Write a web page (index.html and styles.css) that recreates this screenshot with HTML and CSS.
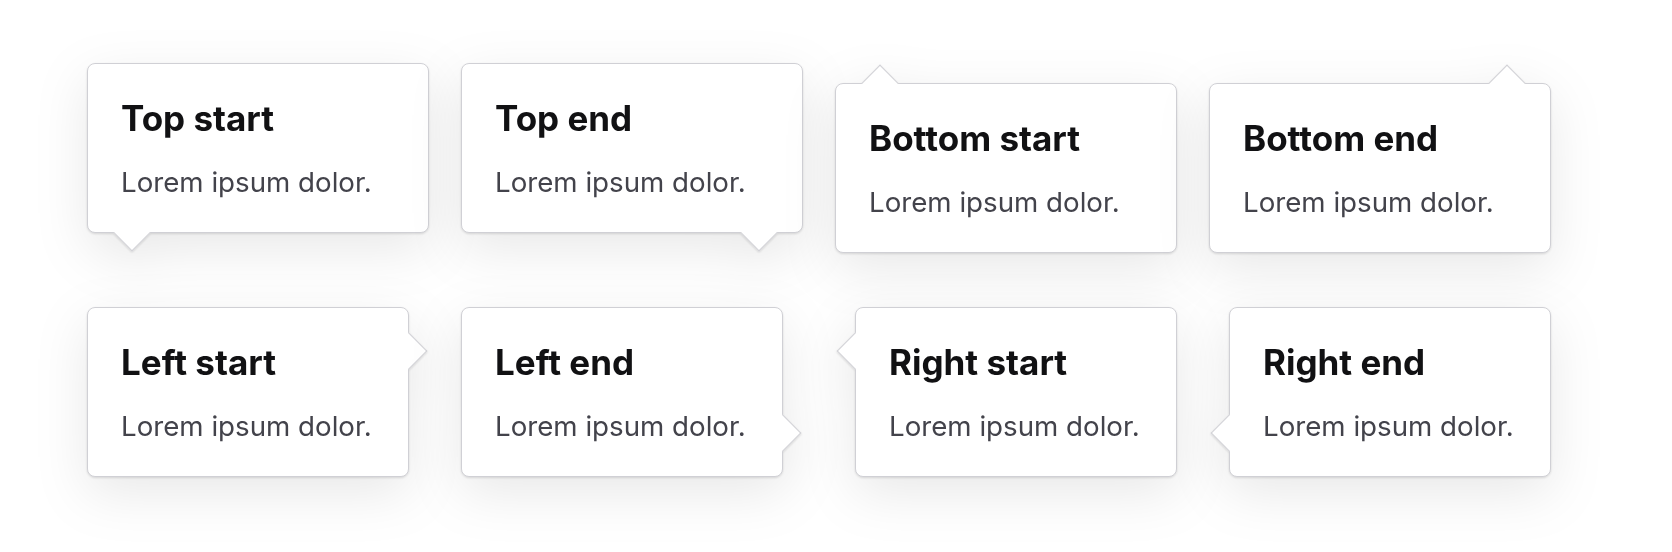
FILE: index.html
```html
<!DOCTYPE html>
<html lang="en">
<head>
  <meta charset="UTF-8" />
  <meta name="viewport" content="width=device-width, initial-scale=1.0"/>
  <title>Popover placements</title>
  <link rel="stylesheet" href="styles.css">
</head>
<body>

  <!-- Popover placement grid -->
  <main class="grid">
    <div class="pop pop-top start">
      <h3>Top start</h3>
      <p>Lorem ipsum dolor.</p>
    </div>
    <div class="pop pop-top end">
      <h3>Top end</h3>
      <p>Lorem ipsum dolor.</p>
    </div>
    <div class="pop pop-bottom start">
      <h3>Bottom start</h3>
      <p>Lorem ipsum dolor.</p>
    </div>
    <div class="pop pop-bottom end">
      <h3>Bottom end</h3>
      <p>Lorem ipsum dolor.</p>
    </div>

    <div class="pop pop-left start">
      <h3>Left start</h3>
      <p>Lorem ipsum dolor.</p>
    </div>
    <div class="pop pop-left end">
      <h3>Left end</h3>
      <p>Lorem ipsum dolor.</p>
    </div>
    <div class="pop pop-right start">
      <h3>Right start</h3>
      <p>Lorem ipsum dolor.</p>
    </div>
    <div class="pop pop-right end">
      <h3>Right end</h3>
      <p>Lorem ipsum dolor.</p>
    </div>
  </main>

</body>
</html>
```

FILE: styles.css
```css
/* General styles */
html, body {
  background: #fff;
}

body {
  font-family: Inter, "Noto Sans", sans-serif;
  margin: 0;
  min-height: 552px;
  color: #111113;
}

/* Grid of popovers */
.grid {
  display: grid;
  grid-template-columns: repeat(4, 342px);
  column-gap: 32px;
  row-gap: 54px;
  align-items: start;
  padding: 63px 0 75px 87px;
}

/* Popover box */
.pop {
  position: relative;
  box-sizing: border-box;
  height: 170px;
  padding: 33px 33px;
  background: #fff;
  border: 1px solid #d0d0d5;
  border-radius: 8px;
  filter: drop-shadow(0 1px 1px rgba(0,0,0,0.13)) drop-shadow(0 16px 26px rgba(0,0,0,0.09));
}

.pop h3 {
  margin: 0 0 26px;
  font-size: 35px;
  line-height: 42px;
  font-weight: 700;
}

.pop p {
  margin: 0;
  font-size: 27.7px;
  line-height: 34px;
  color: #43434b;
}

/* Arrow: rotated square sitting on the edge */
.pop::before {
  content: "";
  position: absolute;
  box-sizing: border-box;
  width: 26px; height: 26px;
  background: #fff;
  border: 0 solid #d0d0d5;
  transform: rotate(45deg);
}

/* Top placements: arrow underneath */
.pop-top { margin-bottom: 20px; }
.pop-top::before {
  bottom: -14px;
  border-right-width: 1px;
  border-bottom-width: 1px;
}
.pop-top.start::before { left: 31px; }
.pop-top.end::before { right: 30px; }

/* Bottom placements: arrow on top */
.pop-bottom { margin-top: 20px; }
.pop-bottom::before {
  top: -14px;
  border-top-width: 1px;
  border-left-width: 1px;
}
.pop-bottom.start::before { left: 31px; }
.pop-bottom.end::before { right: 30px; }

/* Left placements: arrow to the right */
.pop-left { margin-right: 20px; }
.pop-left::before {
  right: -14px;
  border-top-width: 1px;
  border-right-width: 1px;
}
.pop-left.start::before { top: 30px; }
.pop-left.end::before { bottom: 30px; }

/* Right placements: arrow to the left */
.pop-right { margin-left: 20px; }
.pop-right::before {
  left: -14px;
  border-bottom-width: 1px;
  border-left-width: 1px;
}
.pop-right.start::before { top: 30px; }
.pop-right.end::before { bottom: 30px; }
```
